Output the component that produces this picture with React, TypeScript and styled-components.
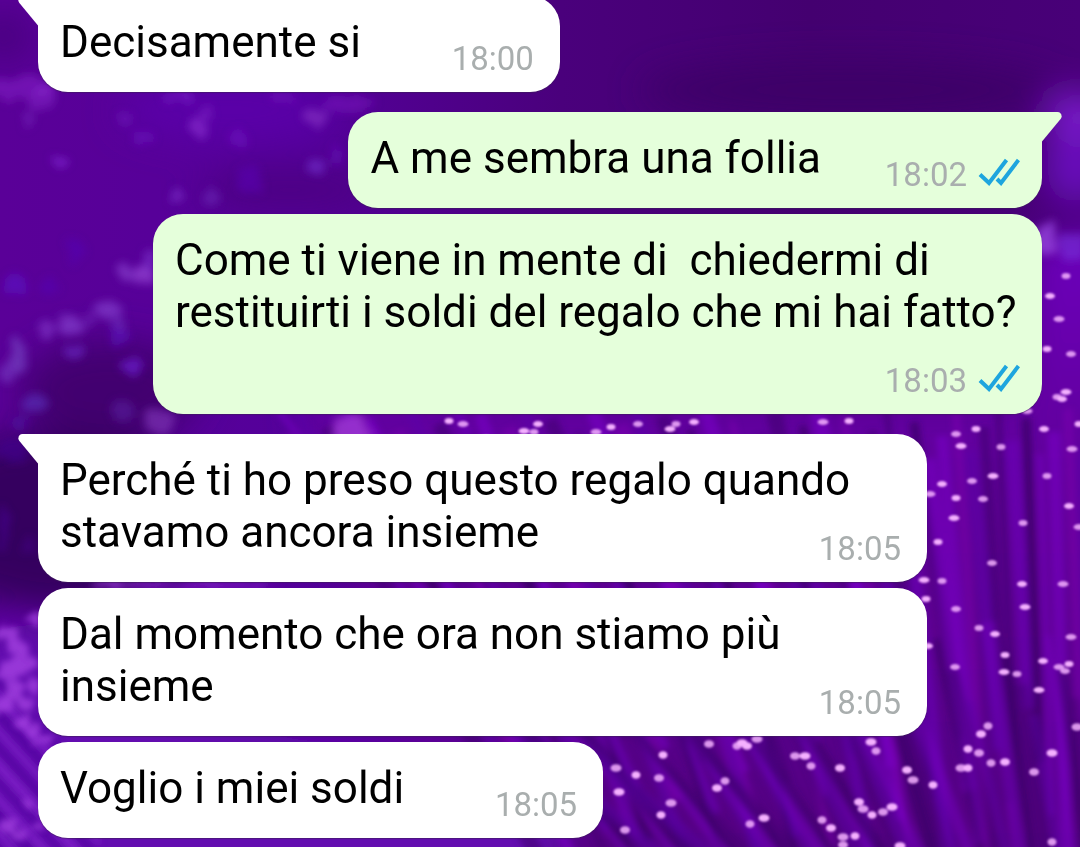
import React from "react";
import styled, { createGlobalStyle } from "styled-components";

const GlobalStyle = createGlobalStyle`
  * {
    box-sizing: border-box;
  }

  body {
    margin: 0;
    background: #4b0082;
    font-family: Roboto, "Liberation Sans", sans-serif;
  }
`;

const Screen = styled.main`
  position: relative;
  min-height: 100vh;
  overflow: hidden;
`;

const WallpaperSvg = styled.svg`
  position: absolute;
  inset: 0;
  width: 100%;
  height: 100%;
`;

const MessageList = styled.ol`
  position: relative;
  display: flex;
  flex-direction: column;
  gap: 20px;
  margin: -4px 0 0;
  padding: 0 38px 8px;
  list-style: none;
`;

const Group = styled.li`
  display: flex;
  flex-direction: column;
  gap: 6px;
`;

const Bubble = styled.article<{ $mine: boolean; $tail: boolean }>`
  position: relative;
  display: grid;
  align-self: ${(p) => (p.$mine ? "flex-end" : "flex-start")};
  max-width: calc(100% - 115px);
  padding: 20px 22px 24px;
  border-radius: 30px;
  border-top-left-radius: ${(p) => (p.$tail && !p.$mine ? 0 : 30)}px;
  border-top-right-radius: ${(p) => (p.$tail && p.$mine ? 0 : 30)}px;
  background: ${(p) => (p.$mine ? "#e5ffdb" : "#ffffff")};
  box-shadow: 0 1px 1px rgba(60, 30, 90, 0.6);
`;

const Text = styled.p`
  grid-area: 1 / 1;
  margin: 0;
  color: #000000;
  font-size: 44px;
  line-height: 52px;
  white-space: pre-wrap;
`;

/* Keeps room for the time at the end of the last line. */
const MetaRoom = styled.span<{ $mine: boolean }>`
  display: inline-block;
  width: ${(p) => (p.$mine ? 199 : 177)}px;
  height: 1px;
`;

const Meta = styled.footer<{ $mine: boolean }>`
  grid-area: 1 / 1;
  align-self: end;
  justify-self: end;
  display: flex;
  align-items: center;
  gap: 11px;
  margin: 0 ${(p) => (p.$mine ? 0 : 4)}px -11px 0;
  color: #a9aeae;
  font-size: 33px;
  line-height: 40px;
`;

const TailSvg = styled.svg<{ $mine: boolean }>`
  position: absolute;
  top: 0;
  ${(p) => (p.$mine ? "right: -20px;" : "left: -20px;")}
  width: 22px;
  height: 30px;
  fill: ${(p) => (p.$mine ? "#e5ffdb" : "#ffffff")};
`;

const TicksSvg = styled.svg`
  width: 42px;
  height: 28px;
  margin-top: -6px;
  fill: none;
  stroke: #1ea5de;
  stroke-width: 4;
`;

function Tail({ mine }: { mine: boolean }) {
  return (
    <TailSvg $mine={mine} viewBox="0 0 22 30" aria-hidden="true">
      <path
        d="M22 0H4.5C1 0-.9 4 1.4 7L20 29.500H22Z"
        transform={mine ? "translate(22 0) scale(-1 1)" : undefined}
      />
    </TailSvg>
  );
}

function ReadTicks() {
  return (
    <TicksSvg viewBox="0 0 42 28" role="img" aria-label="Letto">
      <path d="M2 16.500L11 25L28.500 2" />
      <path d="M19 21L23 25L40.500 2" />
    </TicksSvg>
  );
}

/* Fibre tips: x, y */
const tips: [number, number][] = [
  [1066, 276], [1050, 296], [1059, 319], [1047, 349], [1071, 354], [1066, 392],
  [1057, 397], [1062, 399], [1027, 411], [976, 429], [956, 434], [961, 446],
  [1001, 447], [1044, 429], [1072, 449], [1079, 424], [972, 481], [993, 476],
  [1047, 476], [942, 484], [930, 494], [956, 498], [983, 499], [954, 518],
  [1023, 523], [1069, 506], [1079, 527], [938, 542], [992, 563], [924, 580],
  [942, 581], [1022, 584], [1063, 584], [926, 599], [956, 609], [1025, 607],
  [979, 628], [995, 634], [1071, 637], [1005, 655], [955, 667], [1004, 672],
  [1017, 674], [1043, 661], [1059, 667], [1069, 664], [1065, 671], [1039, 690],
  [988, 726], [981, 734], [1077, 727], [968, 749], [979, 753], [1052, 753],
  [991, 763], [1005, 762], [961, 768], [968, 768], [1034, 772], [871, 742],
  [876, 751], [907, 770], [913, 780], [933, 785], [709, 744], [742, 743],
  [737, 746], [747, 746], [757, 739], [663, 755], [795, 756], [805, 756],
  [811, 766], [840, 768], [616, 768], [636, 775], [659, 778], [619, 792],
  [725, 781], [717, 788], [671, 803], [661, 815], [625, 830], [764, 818],
  [750, 824], [859, 802], [863, 809], [872, 815], [883, 812], [892, 807],
  [822, 820], [831, 828], [843, 837], [855, 836], [843, 845], [900, 846],
  [1052, 842], [928, 646], [463, 424], [449, 421], [486, 438], [524, 431],
  [534, 432], [538, 424], [596, 432], [611, 427], [638, 424], [670, 429],
  [676, 424], [694, 422], [823, 422], [849, 421],
];

/* Out-of-focus lights: x, y, horizontal radius, vertical radius, colour, opacity */
const lights: [number, number, number, number, string, number][] = [
  [20, 88, 34, 12, "#8a22cc", 0.5], [42, 96, 12, 12, "#9030d8", 0.4],
  [28, 120, 9, 8, "#8030c8", 0.5], [197, 128, 9, 12, "#8c30d0", 0.65],
  [205, 114, 6, 6, "#8c30d0", 0.4], [180, 97, 14, 6, "#7a20c8", 0.6],
  [317, 117, 12, 9, "#8c38c8", 0.6], [350, 104, 26, 9, "#7c18c0", 0.5],
  [283, 96, 14, 4, "#8822cc", 0.5], [62, 163, 9, 6, "#8428d8", 0.7],
  [143, 137, 11, 6, "#6c14c0", 0.6], [125, 120, 8, 6, "#7420c0", 0.5],
  [177, 198, 7, 7, "#7c30c8", 0.7], [210, 196, 7, 10, "#7030c0", 0.5],
  [317, 168, 9, 7, "#7430d0", 0.6], [238, 138, 8, 9, "#7418c8", 0.5],
  [250, 180, 14, 14, "#5a00b8", 0.5], [336, 155, 6, 12, "#6c14c4", 0.5],
  [15, 285, 12, 10, "#5c10c8", 0.6], [125, 273, 9, 11, "#8438c8", 0.75],
  [143, 273, 10, 10, "#9040d0", 0.8], [150, 262, 6, 10, "#7a30c8", 0.7],
  [108, 310, 14, 8, "#8038c8", 0.75], [120, 322, 6, 8, "#7030c0", 0.6],
  [72, 327, 10, 12, "#8038c8", 0.75], [46, 329, 9, 9, "#8038c8", 0.65],
  [62, 322, 5, 7, "#8038c8", 0.6], [17, 355, 9, 17, "#7440c0", 0.7],
  [8, 373, 9, 12, "#7434c0", 0.65], [88, 322, 6, 7, "#7028b8", 0.6],
  [75, 352, 8, 6, "#6c28c8", 0.65], [117, 336, 9, 10, "#5c18c0", 0.6],
  [132, 367, 9, 8, "#6c20d0", 0.7], [35, 403, 11, 9, "#5c30c0", 0.6],
  [75, 250, 8, 12, "#5200b8", 0.5], [48, 288, 9, 10, "#5400b8", 0.5],
  [160, 420, 16, 13, "#8038b8", 0.65], [122, 412, 9, 12, "#5c20a8", 0.5],
  [20, 424, 7, 7, "#5010a8", 0.6], [12, 450, 16, 12, "#440098", 0.5],
  [4, 530, 5, 24, "#4c00a0", 0.5], [30, 545, 8, 9, "#4a0098", 0.4],
  [350, 432, 20, 18, "#a43cd8", 0.75], [1046, 240, 10, 16, "#9848e0", 0.75],
  [1072, 246, 14, 14, "#7c30e0", 0.6], [120, 584, 30, 5, "#9838d8", 0.7],
  [200, 585, 80, 4, "#7c18c0", 0.8],
];

/* Bright fringe along the left edge: x, y, radius */
const fringe: [number, number, number][] = [
  [8, 634, 11], [18, 648, 11], [34, 620, 7], [24, 664, 12], [10, 672, 11],
  [14, 692, 12], [4, 706, 10], [26, 704, 9], [34, 684, 8], [22, 722, 8],
  [34, 730, 7], [40, 742, 7], [48, 740, 6], [8, 826, 9], [18, 836, 8],
  [30, 806, 6], [36, 826, 6],
];

const streakColors = ["#7a00c8", "#300058", "#6c00bc", "#400070", "#5c00a8", "#7c08b0"];

function Wallpaper() {
  const streaks = Array.from({ length: 62 }, (_, i) => {
    const x = 330 + i * 14;
    const lean = Math.max(0, (1090 - x) * 0.3) + 12;
    return (
      <path
        key={i}
        d={`M${x - 60} ${400 + ((i * 37) % 60)}L${x - 60 + lean} ${700 + ((i * 53) % 200)}`}
        stroke={streakColors[(i * 5 + (i >> 2)) % streakColors.length]}
        strokeWidth={6 + ((i * 7) % 11)}
        opacity={0.55}
      />
    );
  });
  const lower = Array.from({ length: 44 }, (_, i) => {
    const x = 560 + i * 14;
    const lean = Math.max(16, (1100 - x) * 0.22);
    return (
      <path
        key={i}
        d={`M${x - lean} ${620 + ((i * 31) % 110)}L${x + lean * 0.6} 860`}
        stroke={streakColors[(i * 7 + (i >> 1)) % streakColors.length]}
        strokeWidth={6 + ((i * 5) % 9)}
        opacity={0.45}
      />
    );
  });
  const corner = Array.from({ length: 14 }, (_, i) => (
    <path
      key={i}
      d={`M-20 ${660 + i * 17}L100 ${792 + i * 17}`}
      stroke={i % 2 ? "#8a28d0" : "#50009c"}
      strokeWidth={5 + (i % 3) * 2}
      opacity={0.6}
    />
  ));

  return (
    <WallpaperSvg viewBox="0 0 1080 847" preserveAspectRatio="xMidYMid slice" aria-hidden="true">
      <defs>
        <linearGradient id="sky" x1="0" y1="0" x2="1" y2="0">
          <stop offset="0" stopColor="#5a0098" />
          <stop offset="0.28" stopColor="#54009a" />
          <stop offset="0.52" stopColor="#4a007c" />
          <stop offset="0.75" stopColor="#440070" />
          <stop offset="1" stopColor="#480078" />
        </linearGradient>
        <linearGradient id="field" x1="0" y1="0" x2="0" y2="1">
          <stop offset="0" stopColor="#6c00bc" />
          <stop offset="0.4" stopColor="#600098" />
          <stop offset="1" stopColor="#520080" />
        </linearGradient>
        <filter id="soft" x="-20%" y="-20%" width="140%" height="140%">
          <feTurbulence type="fractalNoise" baseFrequency="0.07" numOctaves="2" seed="4" result="noise" />
          <feDisplacementMap in="SourceGraphic" in2="noise" scale="16" xChannelSelector="R" yChannelSelector="G" />
          <feGaussianBlur stdDeviation="4" />
        </filter>
        <filter id="rough" x="-40%" y="-20%" width="180%" height="140%">
          <feTurbulence type="fractalNoise" baseFrequency="0.1" numOctaves="2" seed="9" result="noise" />
          <feDisplacementMap in="SourceGraphic" in2="noise" scale="20" xChannelSelector="R" yChannelSelector="G" />
          <feGaussianBlur stdDeviation="3" />
        </filter>
        <filter id="wide" x="-50%" y="-50%" width="200%" height="200%">
          <feGaussianBlur stdDeviation="18" />
        </filter>
        <filter id="fine" x="-20%" y="-20%" width="140%" height="140%">
          <feGaussianBlur stdDeviation="3" />
        </filter>
        <filter id="glow" x="-20%" y="-20%" width="140%" height="140%">
          <feGaussianBlur stdDeviation="1" />
        </filter>
      </defs>

      <rect width="1080" height="847" fill="url(#sky)" />
      <g filter="url(#wide)">
        <ellipse cx="4" cy="36" rx="30" ry="26" fill="#480080" />
        <ellipse cx="230" cy="110" rx="110" ry="30" fill="#5a00a8" />
        <ellipse cx="290" cy="190" rx="90" ry="24" fill="#4e0084" />
        <ellipse cx="850" cy="90" rx="210" ry="30" fill="#3e0068" />
        <ellipse cx="110" cy="390" rx="90" ry="50" fill="#420070" />
        <ellipse cx="60" cy="520" rx="150" ry="90" fill="#36005e" />
        <path d="M300 400L1020 400L1030 240L1120 230L1120 880L560 880L400 740Z" fill="url(#field)" />
        <path d="M-40 640L40 620L80 700L300 740L560 760V900H-40Z" fill="#6410b0" />
        <ellipse cx="1078" cy="116" rx="30" ry="20" fill="#8420dc" />
        <ellipse cx="1076" cy="168" rx="30" ry="36" fill="#6a08c0" />
      </g>
      <g filter="url(#fine)">
        {streaks}
        {lower}
        {corner}
      </g>
      <g filter="url(#soft)">
        {lights.map(([cx, cy, rx, ry, fill, opacity]) => (
          <ellipse key={`${cx}-${cy}`} cx={cx} cy={cy} rx={rx} ry={ry} fill={fill} opacity={opacity} />
        ))}
      </g>
      <g filter="url(#rough)" fill="#a844e4" opacity="0.75">
        {fringe.map(([cx, cy, r]) => (
          <ellipse key={`${cx}-${cy}`} cx={cx} cy={cy} rx={r} ry={r - 2} />
        ))}
      </g>
      <g filter="url(#glow)" fill="#f4b0ff">
        {tips.map(([cx, cy], i) => (
          <ellipse
            key={`${cx}-${cy}`}
            cx={cx}
            cy={cy}
            rx={4.5 + (i % 3) * 0.5}
            ry={cy > 700 ? 3.8 : 3}
            opacity={0.85 + (i % 2) * 0.15}
          />
        ))}
      </g>
    </WallpaperSvg>
  );
}

type Message = { text: string; time: string };
type MessageGroup = { mine: boolean; messages: Message[] };

const groups: MessageGroup[] = [
  { mine: false, messages: [{ text: "Decisamente si", time: "18:00" }] },
  {
    mine: true,
    messages: [
      { text: "A me sembra una follia", time: "18:02" },
      {
        text: "Come ti viene in mente di  chiedermi di restituirti i soldi del regalo che mi hai fatto?",
        time: "18:03",
      },
    ],
  },
  {
    mine: false,
    messages: [
      { text: "Perché ti ho preso questo regalo quando stavamo ancora insieme", time: "18:05" },
      { text: "Dal momento che ora non stiamo più insieme", time: "18:05" },
      { text: "Voglio i miei soldi", time: "18:05" },
    ],
  },
];

export default function App() {
  return (
    <Screen>
      <GlobalStyle />
      <Wallpaper />
      <MessageList>
        {groups.map(({ mine, messages }) => (
          <Group key={messages[0].text}>
            {messages.map((message, index) => (
              <Bubble key={message.text} $mine={mine} $tail={index === 0}>
                {index === 0 && <Tail mine={mine} />}
                <Text>
                  {message.text}
                  <MetaRoom $mine={mine} />
                </Text>
                <Meta $mine={mine}>
                  <time>{message.time}</time>
                  {mine && <ReadTicks />}
                </Meta>
              </Bubble>
            ))}
          </Group>
        ))}
      </MessageList>
    </Screen>
  );
}
